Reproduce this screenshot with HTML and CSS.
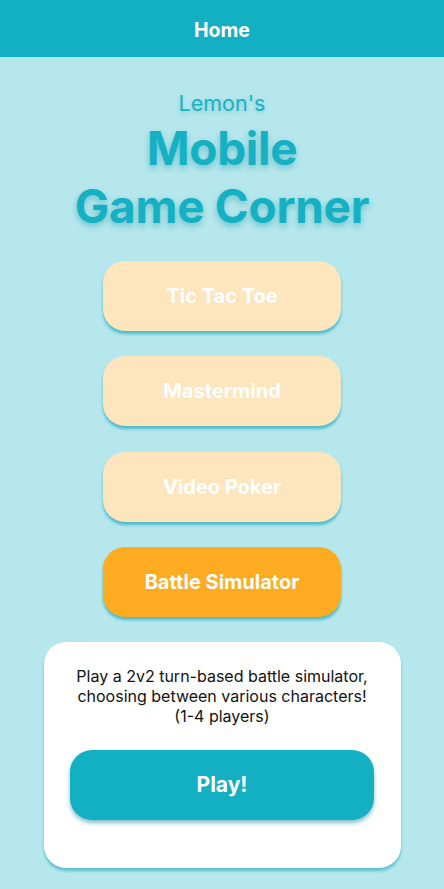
FILE: index.html
```html
<!DOCTYPE html>
<html>
<head>
<meta charset="utf-8">
<link rel="stylesheet" href="styles.css">
</head>
<body>
<header class="topbar"><span class="topbar-title">Home</span></header>
<main class="page">
  <div class="subtitle">Lemon's</div>
  <h1 class="title">Mobile<br>Game Corner</h1>
  <nav class="games">
    <button class="game">Tic Tac Toe</button>
    <button class="game">Mastermind</button>
    <button class="game">Video Poker</button>
    <button class="game game-active">Battle Simulator</button>
  </nav>
  <section class="card">
    <p class="card-text">Play a 2v2 turn-based battle simulator,<br>choosing between various characters!<br>(1-4 players)</p>
    <button class="play">Play!</button>
  </section>
</main>
</body>
</html>
```
FILE: styles.css
```css
* { box-sizing: border-box; }
html, body { margin: 0; padding: 0; }
body {
  width: 444px;
  height: 889px;
  overflow: hidden;
  background: #b6e7ec;
  font-family: Inter, "Noto Sans", sans-serif;
}
.topbar {
  height: 57px;
  background: #12b0c2;
  display: flex;
  align-items: center;
  justify-content: center;
  padding-top: 3px;
}
.topbar-title {
  color: #fff;
  font-weight: 700;
  font-size: 19.5px;
}
.page {
  display: flex;
  flex-direction: column;
  align-items: center;
  padding-top: 33px;
}
.subtitle {
  font-size: 21.5px;
  line-height: 26px;
  color: #18b2c3;
  text-shadow: 0 2px 4px rgba(20, 160, 180, 0.35);
}
.title {
  margin: 3px 0 0;
  font-size: 46px;
  line-height: 58px;
  font-weight: 700;
  text-align: center;
  color: #15b1c3;
  letter-spacing: -0.3px;
  text-shadow: 0 3px 6px rgba(10, 150, 170, 0.45);
}
.games {
  margin-top: 26px;
  display: flex;
  flex-direction: column;
  gap: 25.3px;
}
.game {
  width: 238px;
  height: 70px;
  border: none;
  border-radius: 22px;
  background: #fde6bd;
  color: #fff;
  font-family: inherit;
  font-weight: 700;
  font-size: 20px;
  box-shadow: 0 3px 3px rgba(30, 170, 190, 0.7);
}
.game-active { background: #fdab20; }
.card {
  margin-top: 25px;
  width: 357px;
  background: #fff;
  border-radius: 22px;
  padding: 24px 27px 48px;
  display: flex;
  flex-direction: column;
  align-items: center;
  box-shadow: 0 3px 3px rgba(30, 170, 190, 0.6);
}
.card-text {
  margin: 0;
  font-size: 16px;
  line-height: 20px;
  text-align: center;
  color: #111;
}
.play {
  margin-top: 24px;
  width: 304px;
  height: 70px;
  border: none;
  border-radius: 22px;
  background: #12b0c2;
  color: #fff;
  font-family: inherit;
  font-weight: 700;
  font-size: 21px;
  box-shadow: 0 3px 4px rgba(10, 130, 150, 0.5);
}
```
